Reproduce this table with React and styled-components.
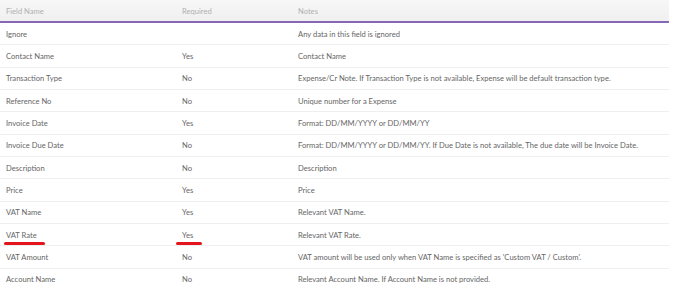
import React from "react";
import styled, { createGlobalStyle } from "styled-components";

const Global = createGlobalStyle`
  body {
    margin: 0;
    background: #fff;
    font-family: "Lato", "Open Sans", sans-serif;
  }
`;

const Table = styled.div`
  width: 669px;
  font-size: 7.6px;
  color: #666;
`;

const Grid = styled.div`
  display: grid;
  grid-template-columns: 176px 116px 1fr;
  align-items: center;
  justify-items: start;
  padding-left: 6px;
`;

const Head = styled(Grid)`
  height: 21px;
  background: linear-gradient(#f7f7f7, #f0f0f0);
  border-bottom: 2px solid #8667b4;
  color: #b0b0b0;
`;

const Row = styled(Grid)`
  height: 21.33px;
  border-bottom: 1px solid #efefef;
`;

const Cell = styled.span`
  position: relative;
  white-space: nowrap;
`;

// hand drawn red underline
const Mark = styled.i`
  position: absolute;
  left: ${(p) => p.$l}px;
  right: ${(p) => p.$r}px;
  bottom: -5px;
  height: 3px;
  border-radius: 2px;
  background: #e3141c;
`;

const rows = [
  ["Ignore", "", "Any data in this field is ignored"],
  ["Contact Name", "Yes", "Contact Name"],
  ["Transaction Type", "No", "Expense/Cr Note. If Transaction Type is not available, Expense will be default transaction type."],
  ["Reference No", "No", "Unique number for a Expense"],
  ["Invoice Date", "Yes", "Format: DD/MM/YYYY or DD/MM/YY"],
  ["Invoice Due Date", "No", "Format: DD/MM/YYYY or DD/MM/YY. If Due Date is not available, The due date will be Invoice Date."],
  ["Description", "No", "Description"],
  ["Price", "Yes", "Price"],
  ["VAT Name", "Yes", "Relevant VAT Name."],
  ["VAT Rate", "Yes", "Relevant VAT Rate.", true],
  ["VAT Amount", "No", "VAT amount will be used only when VAT Name is specified as 'Custom VAT / Custom'."],
  ["Account Name", "No", "Relevant Account Name. If Account Name is not provided."],
];

export default function App() {
  return (
    <>
      <Global />
      <Table>
        <Head>
          <span>Field Name</span>
          <span>Required</span>
          <span>Notes</span>
        </Head>
        {rows.map(([name, req, note, marked]) => (
          <Row key={name}>
            <Cell>{name}{marked && <Mark $l={-2} $r={-8} />}</Cell>
            <Cell>{req}{marked && <Mark $l={-6} $r={-9} />}</Cell>
            <Cell>{note}</Cell>
          </Row>
        ))}
      </Table>
    </>
  );
}
